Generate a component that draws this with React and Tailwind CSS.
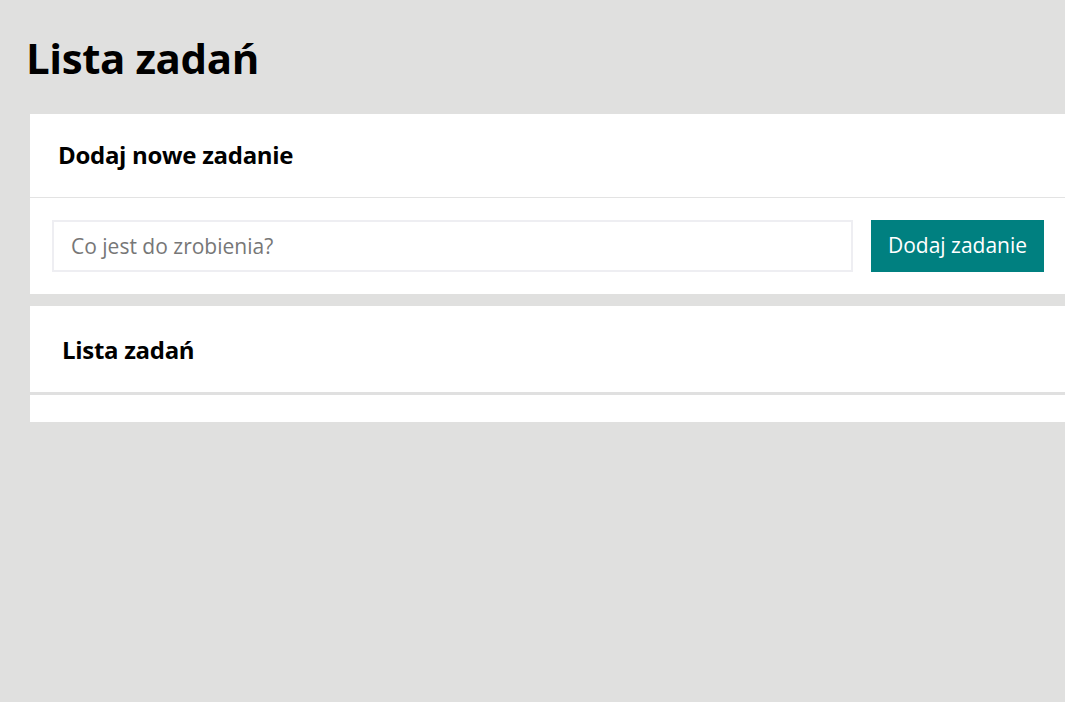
import React, { useState } from 'react';

const font = { fontFamily: '"Open Sans", "Noto Sans", sans-serif' };

const App = () => {
  const [text, setText] = useState('');

  return (
    <div className="min-h-screen w-full overflow-hidden bg-[#e0e0df]" style={font}>
      <h1 className="pl-[26px] pt-[30px] text-[42px] font-bold leading-[56px] tracking-[-0.4px] text-black">Lista zadań</h1>

      <div className="ml-[30px] mt-[28px] w-[1036px] bg-white">
        <div className="flex h-[84px] items-center border-b border-[#e3e3e3] px-[28px] pb-[2px]">
          <h2 className="text-[24px] font-bold tracking-[-0.3px] text-black">Dodaj nowe zadanie</h2>
        </div>
        <div className="flex items-center gap-[18px] px-[22px] py-[22px]">
          <input
            value={text}
            onChange={e => setText(e.target.value)}
            placeholder="Co jest do zrobienia?"
            className="h-[52px] w-[801px] border-2 border-[#eeeef2] px-[17px] text-[21px] text-black outline-none placeholder:text-[#777]"
          />
          <button className="h-[52px] w-[173px] bg-[#008080] text-[21px] text-white">Dodaj zadanie</button>
        </div>
      </div>

      <div className="ml-[30px] mt-[12px] w-[1036px] bg-white">
        <div className="flex h-[89px] items-center border-b-[3px] border-[#e0e0e0] px-[32px] pt-[2px]">
          <h2 className="text-[24px] font-bold tracking-[-0.3px] text-black">Lista zadań</h2>
        </div>
        <ul className="h-[27px]"></ul>
      </div>
    </div>
  );
};

export default App;
